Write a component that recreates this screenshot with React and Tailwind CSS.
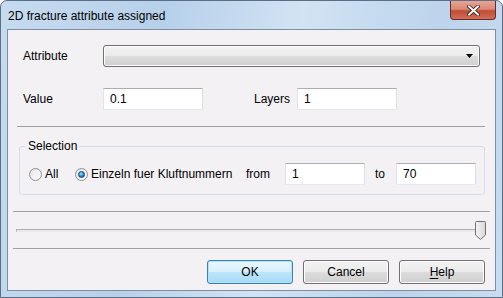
const font = { fontFamily: '"Liberation Sans", Arial, sans-serif' };

const Sep = ({ className }) => (
  <div className={`h-px bg-[#a0a0a0] ${className}`} />
);

const TextBox = ({ value, className }) => (
  <div
    className={`h-[22px] bg-white border border-[#abadb3] border-l-[#e2e3ea] border-r-[#dbdfe6] border-b-[#e3e9ef] flex items-center pl-[6px] text-[12px] text-black ${className}`}
  >
    {value}
  </div>
);

const Radio = ({ checked }) => (
  <div className="w-[13px] h-[13px] rounded-full border border-[#8e8f8f] bg-gradient-to-br from-[#e6e6e6] to-[#fdfdfd] flex items-center justify-center">
    {checked && (
      <div className="w-[7px] h-[7px] rounded-full bg-[radial-gradient(circle_at_40%_35%,#9fe6ff,#1f8fd8_55%,#0b3e7a)] border border-[#1b3f6e]" />
    )}
  </div>
);

const Button = ({ children, primary }) => (
  <div
    className={`w-[86px] h-[24px] rounded-[3px] border flex items-center justify-center text-[12px] text-black ${
      primary
        ? "border-[#3c7fb1] bg-[linear-gradient(#eaf6fd_0%,#d9f0fc_50%,#bee6fd_50%,#a7d9f5_100%)] shadow-[inset_0_0_0_1px_#aee3f9]"
        : "border-[#707070] bg-[linear-gradient(#f2f2f2_0%,#ebebeb_50%,#dddddd_50%,#cfcfcf_100%)] shadow-[inset_0_0_0_1px_#fcfcfc]"
    }`}
  >
    {children}
  </div>
);

export default function App() {
  return (
    <div
      className="w-[503px] h-[298px] overflow-hidden rounded-t-[7px] border border-[#5a6f86] bg-[linear-gradient(100deg,#c6dbef_0%,#b7d0ea_30%,#d2e3f3_55%,#bcd4ec_80%,#c9dcef_100%)] flex flex-col"
      style={font}
    >
      {/* Title bar */}
      <div className="h-[28px] flex items-start justify-between shrink-0">
        <div className="pl-[7px] pt-[6px] text-[12px] text-black">
          2D fracture attribute assigned
        </div>
        <div className="mr-[6px] w-[46px] h-[19px] rounded-b-[4px] border border-t-0 border-[#6b2a23] bg-[linear-gradient(#e8a493_0%,#d98a78_45%,#c24a35_55%,#d0705a_100%)] flex items-center justify-center">
          <svg width="13" height="11" viewBox="0 0 13 11">
            <path
              d="M2 1.5 L11 9.5 M11 1.5 L2 9.5"
              stroke="#3a1a14"
              strokeWidth="3.6"
              strokeLinecap="square"
            />
            <path
              d="M2 1.5 L11 9.5 M11 1.5 L2 9.5"
              stroke="#ffffff"
              strokeWidth="2"
              strokeLinecap="square"
            />
          </svg>
        </div>
      </div>

      {/* Client area */}
      <div className="mx-[6px] h-[262px] border border-[#7c8fa3] bg-[#f3f1f4] flex flex-col text-[12px] text-black shrink-0">
        <div className="pt-[15px] flex items-center">
          <div className="w-[95px] pl-[15px]">Attribute</div>
          <div className="w-[377px] h-[22px] rounded-[3px] border border-[#707070] bg-[linear-gradient(#f2f2f2_0%,#ebebeb_50%,#dddddd_50%,#cfcfcf_100%)] shadow-[inset_0_0_0_1px_#fcfcfc] flex items-center justify-end pr-[6px]">
            <svg width="7" height="4" viewBox="0 0 7 4">
              <path d="M0 0 H7 L3.5 4 Z" fill="#000" />
            </svg>
          </div>
        </div>

        <div className="mt-[21px] flex items-center">
          <div className="w-[95px] pl-[15px]">Value</div>
          <TextBox value="0.1" className="w-[100px]" />
          <div className="ml-[51px] w-[43px]">Layers</div>
          <TextBox value="1" className="w-[100px]" />
        </div>

        <Sep className="mt-[16px] ml-[9px] mr-[10px]" />

        {/* Selection group */}
        <div className="mt-[19px] ml-[11px] mr-[10px] h-[49px] relative rounded-[3px] border border-[#d5dfe5] flex items-center">
          <div className="absolute left-[6px] -top-[8px] px-[2px] bg-[#f3f1f4] leading-[14px]">
            Selection
          </div>
          <div className="pl-[9px] pt-[7px] flex items-center">
            <Radio />
            <span className="ml-[3px] w-[16px]">All</span>
            <div className="ml-[14px]">
              <Radio checked />
            </div>
            <span className="ml-[3px] w-[155px]">Einzeln fuer Kluftnummern</span>
            <span className="w-[39px]">from</span>
            <TextBox value="1" className="w-[80px]" />
            <span className="ml-[10px] w-[21px]">to</span>
            <TextBox value="70" className="w-[80px]" />
          </div>
        </div>

        <Sep className="mt-[16px] ml-[5px] mr-[5px]" />

        {/* Slider */}
        <div className="h-[36px] flex items-center pl-[8px] pr-[8px]">
          <div className="flex-1 h-[3px] border border-[#b0b0b0] border-b-[#e7eaea] bg-[#e7eaea]" />
          <svg width="11" height="19" viewBox="0 0 11 19" className="-ml-[10px] mr-[1px]">
            <defs>
              <linearGradient id="th" x1="0" y1="0" x2="1" y2="0">
                <stop offset="0" stopColor="#f3f3f3" />
                <stop offset="1" stopColor="#d8d8d8" />
              </linearGradient>
            </defs>
            <path
              d="M1.5 0.5 H9.5 Q10.5 0.5 10.5 1.5 V14 L5.5 18.5 L0.5 14 V1.5 Q0.5 0.5 1.5 0.5 Z"
              fill="url(#th)"
              stroke="#707070"
            />
          </svg>
        </div>

        <Sep className="ml-[5px] mr-[5px]" />

        {/* Buttons */}
        <div className="mt-[11px] flex justify-end gap-[10px] pr-[10px]">
          <Button primary>OK</Button>
          <Button>Cancel</Button>
          <Button>
            <span>
              <span className="underline underline-offset-2">H</span>elp
            </span>
          </Button>
        </div>
      </div>
    </div>
  );
}
